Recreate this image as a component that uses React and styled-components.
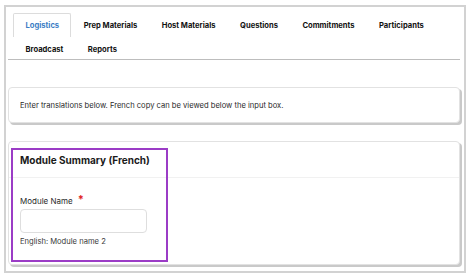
import React from "react";
import styled, { createGlobalStyle } from "styled-components";

const Global = createGlobalStyle`
  html, body { margin: 0; padding: 0; background: #fff; }
  body { font-family: Inter, "Liberation Sans", Arial, sans-serif; color: #222; }
`;

const Frame = styled.div`
  position: relative;
  box-sizing: border-box;
  margin: 5px 0 0 4px;
  width: 462px;
  height: 268px;
  border: 2px solid #d2d2d2;
  padding: 6px 4px 0 2px;
`;

const TabBar = styled.div`
  display: flex;
  flex-wrap: wrap;
  padding-left: 5px;
  border-bottom: 1px solid #bdbdbd;
  height: 47px;
  box-sizing: border-box;
  align-content: flex-start;
`;

const Tab = styled.div`
  box-sizing: border-box;
  height: ${(p) => (p.$active ? "24px" : "23px")};
  line-height: 24px;
  padding: 0 11px 0 11.5px;
  font-size: 7.6px;
  font-weight: 700;
  color: ${(p) => (p.$active ? "#3b7dc4" : "#111")};
  border: 1px solid ${(p) => (p.$active ? "#dcdcdc" : "transparent")};
  border-bottom: none;
  border-radius: 2px 2px 0 0;
  white-space: nowrap;
`;

const Card = styled.div`
  position: relative;
  box-sizing: border-box;
  border: 1px solid #e2e2e2;
  border-radius: 4px;
  background: #fff;
  box-shadow: 2px 2px 0 #c9c9c9;
  margin-top: ${(p) => p.$mt}px;
  width: 452px;
`;

const InfoText = styled.div`
  height: 34px;
  display: flex;
  align-items: center;
  padding: 0 11px;
  font-size: 7.6px;
  color: #2a2a2a;
`;

const CardHeader = styled.div`
  height: 36px;
  display: flex;
  align-items: center;
  padding: 0 11px;
  font-size: 10px;
  font-weight: 700;
  color: #1a1a1a;
  border-bottom: 1px solid #f1f1f1;
  box-sizing: border-box;
`;

const CardBody = styled.div`
  padding: 17px 11px 0;
  height: 86px;
  box-sizing: border-box;
`;

const Label = styled.div`
  font-size: 8px;
  color: #2a2a2a;
  display: flex;
  align-items: flex-start;
  gap: 5px;
  line-height: 12px;
`;

const Req = styled.span`
  color: #e02424;
  font-size: 11px;
  line-height: 8px;
  font-weight: 700;
`;

const Input = styled.div`
  margin-top: 2px;
  width: 127px;
  height: 24px;
  box-sizing: border-box;
  border: 1px solid #dedede;
  border-radius: 4px;
`;

const Hint = styled.div`
  margin-top: 3px;
  font-size: 7.6px;
  color: #3a3a3a;
  line-height: 12px;
`;

const Highlight = styled.div`
  position: absolute;
  left: 2px;
  top: 6px;
  width: 157px;
  height: 114px;
  box-sizing: border-box;
  border: 2px solid #9b3cc6;
  pointer-events: none;
`;

const tabs = [
  "Logistics",
  "Prep Materials",
  "Host Materials",
  "Questions",
  "Commitments",
  "Participants",
  "Broadcast",
  "Reports",
];

export default function App() {
  return (
    <>
      <Global />
      <Frame>
        <TabBar>
          {tabs.map((t, i) => (
            <Tab key={t} $active={i === 0}>
              {t}
            </Tab>
          ))}
        </TabBar>
        <Card $mt={27}>
          <InfoText>
            Enter translations below. French copy can be viewed below the input box.
          </InfoText>
        </Card>
        <Card $mt={18}>
          <CardHeader>Module Summary (French)</CardHeader>
          <CardBody>
            <Label>
              Module Name <Req>*</Req>
            </Label>
            <Input />
            <Hint>English: Module name 2</Hint>
          </CardBody>
          <Highlight />
        </Card>
      </Frame>
    </>
  );
}
